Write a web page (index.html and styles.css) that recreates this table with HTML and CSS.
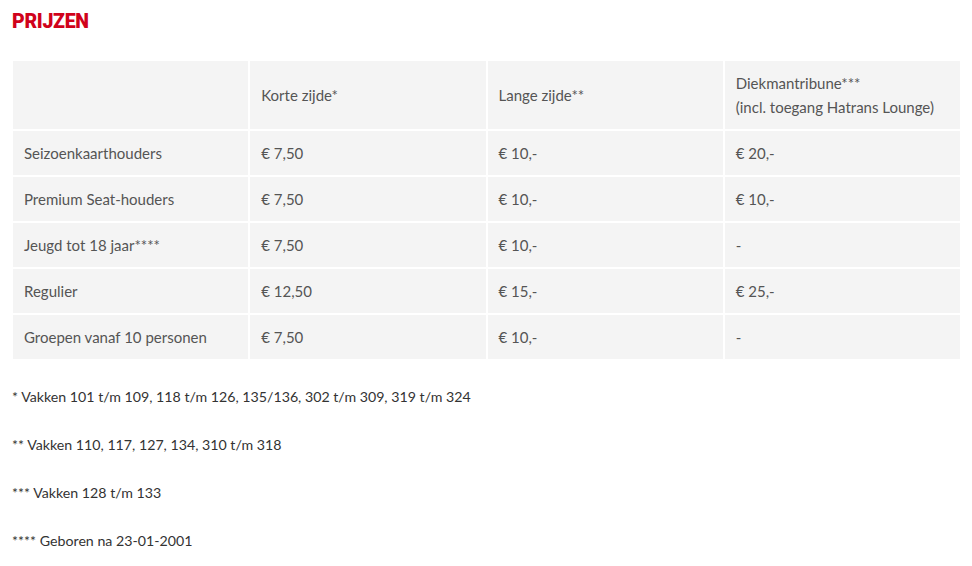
FILE: index.html
```html
<!DOCTYPE html>
<html lang="nl">
<head>
<meta charset="utf-8">
<link rel="stylesheet" href="styles.css">
</head>
<body>
<div class="page">
  <h2 class="title">PRIJZEN</h2>
  <table class="prices">
    <thead>
      <tr>
        <th></th>
        <th>Korte zijde*</th>
        <th>Lange zijde**</th>
        <th>Diekmantribune***<br>(incl. toegang Hatrans Lounge)</th>
      </tr>
    </thead>
    <tbody>
      <tr><td>Seizoenkaarthouders</td><td>€ 7,50</td><td>€ 10,-</td><td>€ 20,-</td></tr>
      <tr><td>Premium Seat-houders</td><td>€ 7,50</td><td>€ 10,-</td><td>€ 10,-</td></tr>
      <tr><td>Jeugd tot 18 jaar****</td><td>€ 7,50</td><td>€ 10,-</td><td>-</td></tr>
      <tr><td>Regulier</td><td>€ 12,50</td><td>€ 15,-</td><td>€ 25,-</td></tr>
      <tr><td>Groepen vanaf 10 personen</td><td>€ 7,50</td><td>€ 10,-</td><td>-</td></tr>
    </tbody>
  </table>
  <div class="notes">
    <p>* Vakken 101 t/m 109, 118 t/m 126, 135/136, 302 t/m 309, 319 t/m 324</p>
    <p>** Vakken 110, 117, 127, 134, 310 t/m 318</p>
    <p>*** Vakken 128 t/m 133</p>
    <p>**** Geboren na 23-01-2001</p>
  </div>
</div>
</body>
</html>
```
FILE: styles.css
```css
html, body {
  margin: 0;
  padding: 0;
  background: #fff;
}
.page {
  font-family: "Lato", "Open Sans", sans-serif;
  color: #555;
  padding: 11px 0 0 0;
}
.title {
  margin: 0 0 0 12px;
  font-family: "Roboto", sans-serif;
  font-weight: 900;
  font-size: 19.5px;
  line-height: 21px;
  color: #d0021b;
  letter-spacing: -0.3px;
  height: 48px;
}
.prices {
  margin-left: 11px;
  width: 951px;
  border-collapse: separate;
  border-spacing: 2px;
  table-layout: fixed;
  font-size: 15px;
}
.prices th,
.prices td {
  background: #f4f4f4;
  text-align: left;
  font-weight: normal;
  vertical-align: middle;
  line-height: 24px;
  padding: 10px 11px;
}
.notes {
  font-family: "Lato", "Open Sans", sans-serif;
  color: #333;
  font-size: 14.2px;
  padding-left: 12px;
}
.notes p {
  margin: 24px 0;
  line-height: 24px;
}
```
